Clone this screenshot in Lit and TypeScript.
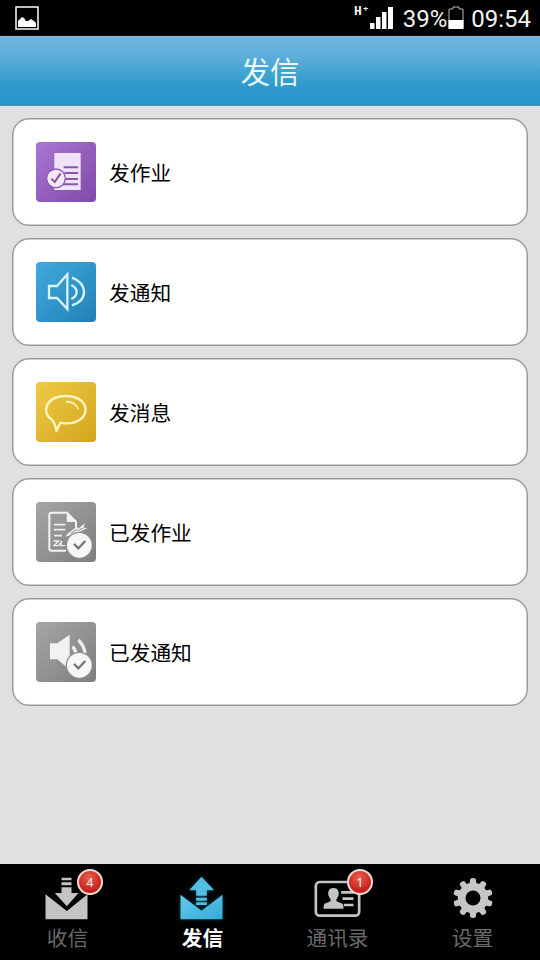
import { LitElement, html, css, svg, nothing } from "lit";
import { customElement, property, state } from "lit/decorators.js";
import { classMap } from "lit/directives/class-map.js";

const sentMark = svg`
  <circle cx="160" cy="166" r="41" fill="#8f8f8f"/>
  <circle cx="160" cy="166" r="37" fill="#f7f7f7"/>
  <path d="M144 162l13 13 21-22" fill="none" stroke="#777" stroke-width="7"/>`;

const tileArt: Record<string, unknown> = {
  homework: svg`
    <path d="M85 69h79v111H85z" fill="#efe4f7"/>
    <path d="M113 112h43M115 129h41M113 147h43M111 163h45" stroke="#8a57b0" stroke-width="6"/>
    <circle cx="90" cy="145" r="30" fill="#8e5bb5"/>
    <circle cx="90" cy="145" r="26" fill="#f3e9fa"/>
    <path d="M76 146l10 10 18-26" fill="none" stroke="#8650ae" stroke-width="6"/>`,
  notice: svg`
    <g fill="none" stroke="#d4f4ff" stroke-width="7">
      <path d="M69 108h24l31-35v104l-31-33H69z"/>
      <path d="M136 105q16 8 16 21t-16 21M138 83q36 14 36 43t-36 40"/>
    </g>`,
  message: svg`
    <path d="M78 149C45 130 57 78 120 78c78 0 78 82 0 82q-10 0-17-2l-12 25q-2-20-13-34z"
      fill="none" stroke="#fff6c2" stroke-width="7" stroke-linejoin="round"/>
    <path d="M120 95q28 0 37 23" fill="none" stroke="#fff6c2" stroke-width="5"/>`,
  sentHomework: svg`
    <path d="M120 182H76q-6 0-6-6V74q0-6 6-6h47l27 27v18" fill="none" stroke="#f2f2f2" stroke-width="6"/>
    <path d="M122 67v29h30z" fill="#f2f2f2"/>
    <path d="M84 104h34M84 119h34M84 137h24" stroke="#eee" stroke-width="5"/>
    <path d="M82 153h16l-14 14h14l9-14-3 14h14" fill="none" stroke="#eee" stroke-width="4"/>
    <path d="M123 132l29-22 6 5 19-15-4 13 11 1-28 14-23 8-14 4z" fill="#eee"/>
    <path d="M133 131l21-13M156 122l16-8" stroke="#929292" stroke-width="3"/>
    ${sentMark}`,
  sentNotice: svg`
    <path d="M72 100h22l37-26v105l-37-31H72z" fill="#f2f2f2"/>
    <path d="M139 110q9 6 10 20M157 90q18 17 20 40" fill="none" stroke="#eee" stroke-width="10"/>
    ${sentMark}`,
};

const toothAngles = Array.from({ length: 10 }, (_, i) => i * 36);

const tabArt: Record<string, unknown> = {
  inbox: svg`
    <g fill="#c4c4c4">
      <path d="M75 118l64 50 62-50v75H75z"/>
      <path d="M123 68h30v8h-30zM123 82h30v9h-30zM123 97h30v17h21l-35 40-36-40h20z"/>
    </g>`,
  send: svg`
    <defs>
      <linearGradient id="send-fill" x1="0" y1="0" x2="1" y2="1">
        <stop offset="0" stop-color="#63cbea"/><stop offset="1" stop-color="#35abd9"/>
      </linearGradient>
      <filter id="send-glow" x="-30%" y="-30%" width="160%" height="160%"><feGaussianBlur stdDeviation="6"/></filter>
    </defs>
    <path d="M75 119l64 47 62-47v74H75zM138 65l38 41h-22v44h-32v-44H101z" fill="#167ba0" opacity=".5" filter="url(#send-glow)"/>
    <path d="M75 119l63 48 63-48v74H75z" fill="url(#send-fill)"/>
    <path d="M138 65l38 41h-22v16h-32v-16H101zM122 128h32v9h-32zM122 142h32v8h-32z" fill="#51bfe4"/>`,
  contacts: svg`
    <rect x="76" y="81" width="130" height="101" rx="12" fill="none" stroke="#c4c4c4" stroke-width="8"/>
    <path d="M129 99c-13 0-18 10-15 23l6 11v6l-18 7q-3 3-3 15h60q0-12-3-15l-18-7v-6l6-11c3-13-2-23-15-23z" fill="#c4c4c4"/>
    <path d="M152 112h37M156 131h33M160 150h29" stroke="#c4c4c4" stroke-width="8"/>`,
  settings: svg`
    <g fill="#c6c6c6">
      ${toothAngles.map(a => svg`<path d="M132 90l2-18q8-6 17 0l2 18z" transform="rotate(${a} 142.500 129)"/>`)}
    </g>
    <circle cx="142.500" cy="129" r="34" fill="none" stroke="#c6c6c6" stroke-width="23"/>`,
};

@customElement("menu-card")
class MenuCard extends LitElement {
  @property() kind = "homework";
  @property() label = "";

  static styles = css`
    :host { display: block; }
    .card {
      box-sizing: border-box; height: 108px; display: flex; align-items: center; gap: 13px;
      padding-left: 24px; background: #fff; border-radius: 17px; box-shadow: inset 0 0 0 1.500px #999;
    }
    .tile { width: 60px; height: 60px; border-radius: 4px; overflow: hidden; flex: none; }
    .tile svg { display: block; }
    .homework { background: linear-gradient(135deg, #a877d0, #8148a8); }
    .notice { background: linear-gradient(135deg, #42aade, #2180b4); }
    .message { background: linear-gradient(135deg, #efca48, #d2a51d); }
    .sentHomework, .sentNotice { background: linear-gradient(135deg, #a6a6a6, #7e7e7e); }
    .label { font-size: 20.700px; line-height: 30px; color: #000; }
  `;

  render() {
    return html`<div class="card">
      <div class="tile ${this.kind}">
        <svg width="60" height="60" viewBox="30 36 180 180">${tileArt[this.kind]}</svg>
      </div>
      <span class="label">${this.label}</span>
    </div>`;
  }
}

@customElement("tab-item")
class TabItem extends LitElement {
  @property() kind = "inbox";
  @property() label = "";
  @property({ type: Number }) count = 0;
  @property({ type: Boolean }) active = false;

  static styles = css`
    :host { display: block; flex: 1; }
    .tab { position: relative; display: flex; flex-direction: column; align-items: center; height: 96px; }
    .tab svg { display: block; flex: none; }
    .label { font-size: 20.700px; line-height: 26px; color: #686868; }
    .active .label { color: #fff; font-weight: 700; }
    .badge {
      position: absolute; left: 77px; top: 5px; width: 26px; height: 26px; box-sizing: border-box;
      border: 2px solid #f3dcd8; border-radius: 50%; display: flex; align-items: center; justify-content: center;
      background: radial-gradient(circle at 45% 30%, #e5604f, #cc2820 60%, #a81510);
      color: #fff; font: 12px/24px "Noto Sans", sans-serif; padding-top: 2px;
    }
  `;

  render() {
    return html`<div class=${classMap({ tab: true, active: this.active })}>
      <svg width="110" height="60" viewBox="-22.500 27 330 180">${tabArt[this.kind]}</svg>
      <span class="label">${this.label}</span>
      ${this.count ? html`<span class="badge">${this.count}</span>` : nothing}
    </div>`;
  }
}

@customElement("app-root")
class AppRoot extends LitElement {
  @state() current = "send";

  items = [
    { kind: "homework", label: "发作业" },
    { kind: "notice", label: "发通知" },
    { kind: "message", label: "发消息" },
    { kind: "sentHomework", label: "已发作业" },
    { kind: "sentNotice", label: "已发通知" },
  ];

  tabs = [
    { kind: "inbox", label: "收信", count: 4 },
    { kind: "send", label: "发信", count: 0 },
    { kind: "contacts", label: "通讯录", count: 1 },
    { kind: "settings", label: "设置", count: 0 },
  ];

  static styles = css`
    :host {
      display: flex; flex-direction: column; width: 540px; height: 960px; overflow: hidden;
      background: #e0e0e0; font-family: "Noto Sans CJK SC", sans-serif;
    }
    .status {
      height: 36px; flex: none; box-sizing: border-box; padding: 0 9px 0 15px; background: #000; color: #f4f4f4;
      display: flex; align-items: center; font: 24px/36px Roboto, sans-serif;
    }
    .status svg { display: block; flex: none; }
    .spacer { flex: 1; }
    .percent { margin-left: 10px; }
    .battery { margin: 0 0 2px 1px; }
    .clock { margin-left: 7px; }
    .percent, .clock { padding-top: 2px; }
    .network { align-self: flex-start; font: 700 13px/14px "Liberation Mono", monospace; padding-top: 5px; }
    .header {
      height: 70px; flex: none; box-sizing: border-box; border-top: 1px solid #8fb9cc; border-bottom: 1px solid #5e91aa;
      display: flex; align-items: center; justify-content: center; padding-bottom: 3px;
      background: linear-gradient(#70b5df, #5eaeda 28%, #45a3d0 52%, #3099cb 70%, #2695c8);
      color: #e6fbff; font-size: 29.300px; box-shadow: 0 1px 2px #d2e7f0;
    }
    .list { flex: 1; padding: 12px; display: flex; flex-direction: column; gap: 12px; }
    .tabs { height: 96px; flex: none; display: flex; background: #000; }
  `;

  render() {
    return html`
      <div class="status">
        <svg width="24" height="24" viewBox="0 0 24 24">
          <rect x="1" y="1" width="22" height="22" fill="none" stroke="#fff" stroke-width="1.500"/>
          <path d="M3 21v-6l2-2 2-2 2 1 2 3h2l3-2 3 2 2 2v4z" fill="#fff"/>
        </svg>
        <span class="spacer"></span>
        <span class="network">H⁺</span>
        <svg width="23" height="22" viewBox="0 0 23 22">
          <path d="M0 16h4.500v6H0zM6 10h4.500v12H6zM12 5h4.500v17H12zM18 0h5v22h-5z" fill="#fff"/>
        </svg>
        <span class="percent">39%</span>
        <svg class="battery" width="16" height="23" viewBox="0 0 16 23">
          <path d="M1 22V3h4V1h6v2h4v19z" fill="none" stroke="#bbb"/>
          <path d="M.5 14h15v9H.5z" fill="#fff"/>
        </svg>
        <span class="clock">09:54</span>
      </div>
      <div class="header">发信</div>
      <div class="list">
        ${this.items.map(i => html`<menu-card .kind=${i.kind} .label=${i.label}></menu-card>`)}
      </div>
      <div class="tabs">
        ${this.tabs.map(t => html`<tab-item .kind=${t.kind} .label=${t.label} .count=${t.count}
          .active=${t.kind === this.current} @click=${() => (this.current = t.kind)}></tab-item>`)}
      </div>`;
  }
}
